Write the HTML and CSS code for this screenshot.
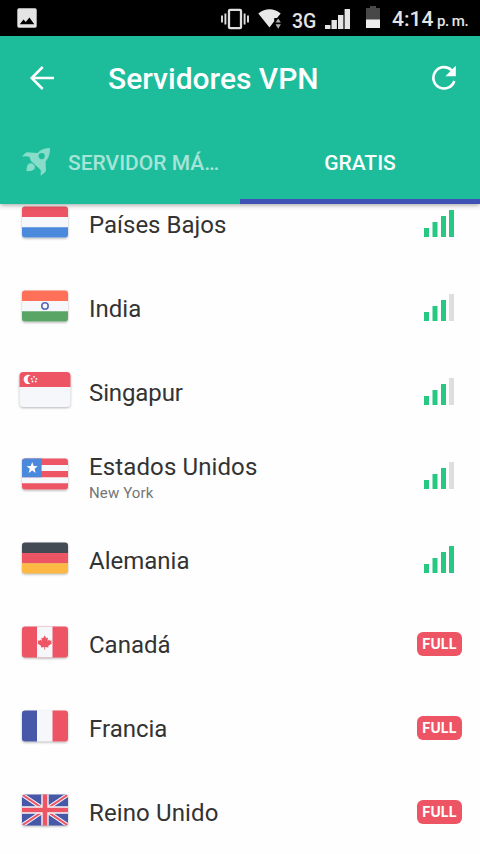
FILE: index.html
```
<!DOCTYPE html>
<html lang="es">
<head>
<meta charset="utf-8">
<title>Servidores VPN</title>
<link rel="stylesheet" href="styles.css">
</head>
<body>
<svg width="0" height="0" class="defs">
  <defs>
    <clipPath id="flag"><rect x="3" y="4.5" width="46" height="31" rx="3"/></clipPath>
    <clipPath id="flag-large"><rect x=".5" y="2" width="51" height="35" rx="4"/></clipPath>
  </defs>
</svg>
<div class="status">
  <svg class="st-photo" width="20" height="20" viewBox="0 0 20 20"><rect x=".3" y=".3" width="19.4" height="19.4" rx="1.6" fill="#e4e4e4"/><path d="M2.8 16.2 6.5 11.5 8.8 14 12.4 9.6 17.3 16.2z" fill="#000"/></svg>
  <svg class="st-vibrate" width="28" height="22" viewBox="0 0 28 22"><rect x="8" y="1.8" width="12" height="18.4" rx="1" fill="none" stroke="#dedede" stroke-width="2.3"/><path d="M1 7.5v7M4.4 5.5v11M23.6 5.5v11M27 7.5v7" stroke="#dedede" stroke-width="1.9"/></svg>
  <svg class="st-wifi" width="24" height="22" viewBox="0 0 24 22"><path d="M.3 4.4Q11.5-4 22.7 4.4L19 9h-2.8v3.2L11.5 18.600z" fill="#e8e8e8"/><path d="M17.500 13.500 20.200 9.500 22.900 13.500zM17.500 15.300H22.900L20.200 19.800z" fill="#b0b0b0"/></svg>
  <span class="st-net">3G</span>
  <svg class="st-cell" width="25" height="20" viewBox="0 0 25 20"><path d="M0 16h5.400v4H0zM6.500 11h5.400v9H6.500zM13 6h5.400v14H13zM19.600 0H25v20h-5.400z" fill="#e4e4e4"/></svg>
  <svg class="st-battery" width="14" height="22" viewBox="0 0 14 22"><path d="M0 2h4V0h6v2h4v12H0z" fill="#484848"/><path d="M0 13.500h14V22H0z" fill="#ededed"/></svg>
  <span class="st-time">4:14</span><span class="st-pm">p. m.</span>
</div>
<header class="header">
  <div class="toolbar">
    <svg class="back" width="26" height="26" viewBox="0 0 26 26"><path d="M25 13H3M13.700 2 2.700 13 13.700 24" fill="none" stroke="#fff" stroke-width="2.500"/></svg>
    <h1 class="title">Servidores VPN</h1>
    <svg class="refresh" width="26" height="26" viewBox="0 0 26 26"><path d="M20.700 5.300A10.700 10.700 0 1 0 23.300 16" fill="none" stroke="#fff" stroke-width="2.600"/><path d="M24.800.8V11.200H14.400z" fill="#fff"/></svg>
  </div>
  <nav class="tabs">
    <div class="tab tab-fast">
      <svg class="rocket" width="30" height="30" viewBox="0 0 30 30"><path fill-rule="evenodd" d="M29 1Q21 1 16.500 6L6 5.300Q4.500 5.500 1 9.500Q5.500 8.800 8.500 10L10 14L17 20.500L19.800 23L19.600 28.800Q23.500 26.500 25 24L24.600 14.500C28 11 29 6 29 1zM20.700 6a3.100 3.100 0 1 1 0 6.200 3.100 3.100 0 0 1 0-6.200z"/><path d="M5.500 24.200Q5.500 18.500 7.500 16.900C11 15 15 18.500 13.600 21.700Q12 24.200 5.500 24.200z"/></svg>
      <span class="tab-label">SERVIDOR MÁ…</span>
    </div>
    <div class="tab tab-active"><span class="tab-label">GRATIS</span></div>
  </nav>
</header>
<main class="list">
  <div class="row">
    <svg class="flag" width="52" height="40" viewBox="0 0 52 40"><g clip-path="url(#flag)"><path fill="#f5f7fa" d="M3 4h46v32H3z"/><path fill="#ed5565" d="M3 4h46v11H3z"/><path fill="#4a89dc" d="M3 25.200h46V36H3z"/></g></svg>
    <div class="name">Países Bajos</div>
    <svg class="signal" width="30" height="27" viewBox="0 0 30 27"><path d="M0 18h5v9H0zM8.500 12h5v15h-5zM17 6h5v21h-5zM25 0h5v27h-5z"/></svg>
  </div>
  <div class="row">
    <svg class="flag" width="52" height="40" viewBox="0 0 52 40"><g clip-path="url(#flag)"><path fill="#f5f7fa" d="M3 4h46v32H3z"/><path fill="#ff7058" d="M3 4h46v11H3z"/><path fill="#58a566" d="M3 25.200h46V36H3z"/><circle cx="26" cy="20" r="3.200" fill="none" stroke="#5866b8" stroke-width="1.600"/></g></svg>
    <div class="name">India</div>
    <svg class="signal" width="30" height="27" viewBox="0 0 30 27"><path d="M0 18h5v9H0zM8.500 12h5v15h-5zM17 6h5v21h-5z"/><path class="off" d="M25 0h5v27h-5z"/></svg>
  </div>
  <div class="row">
    <svg class="flag" width="52" height="40" viewBox="0 0 52 40"><g clip-path="url(#flag-large)"><path fill="#f5f7fa" d="M0 2h52v36H0z"/><path fill="#ed5565" d="M0 2h52v15H0z"/><path fill="#fff" d="M11.500 5.200A4.700 4.700 0 1 0 11.500 13.600 4.500 4.500 0 0 1 11.500 5.200z"/><g fill="#fff"><circle cx="15" cy="6.800" r=".9"/><circle cx="12.700" cy="8.800" r=".9"/><circle cx="17.400" cy="8.800" r=".9"/><circle cx="13.500" cy="11.500" r=".9"/><circle cx="16.700" cy="11.500" r=".9"/></g></g></svg>
    <div class="name name-tight">Singapur</div>
    <svg class="signal" width="30" height="27" viewBox="0 0 30 27"><path d="M0 18h5v9H0zM8.500 12h5v15h-5zM17 6h5v21h-5z"/><path class="off" d="M25 0h5v27h-5z"/></svg>
  </div>
  <div class="row">
    <svg class="flag" width="52" height="40" viewBox="0 0 52 40"><g clip-path="url(#flag)"><path fill="#f5f7fa" d="M3 4h46v32H3z"/><path fill="#ed5565" d="M3 4h46v7H3zM3 17h46v6.200H3zM3 29.300h46V36H3z"/><path fill="#4a89dc" d="M3 4h19.600v19.200H3z"/><path fill="#fff" d="M13.200 8l1.500 4 4.100.2-3.200 2.600 1.100 4.100-3.500-2.300-3.500 2.300 1.100-4.100-3.200-2.600 4.100-.2z"/></g></svg>
    <div class="name name-wide">Estados Unidos<div class="city">New York</div></div>
    <svg class="signal" width="30" height="27" viewBox="0 0 30 27"><path d="M0 18h5v9H0zM8.500 12h5v15h-5zM17 6h5v21h-5z"/><path class="off" d="M25 0h5v27h-5z"/></svg>
  </div>
  <div class="row">
    <svg class="flag" width="52" height="40" viewBox="0 0 52 40"><g clip-path="url(#flag)"><path fill="#434a54" d="M3 4h46v11H3z"/><path fill="#ed5565" d="M3 15h46v10.200H3z"/><path fill="#fdb943" d="M3 25.200h46V36H3z"/></g></svg>
    <div class="name">Alemania</div>
    <svg class="signal" width="30" height="27" viewBox="0 0 30 27"><path d="M0 18h5v9H0zM8.500 12h5v15h-5zM17 6h5v21h-5zM25 0h5v27h-5z"/></svg>
  </div>
  <div class="row">
    <svg class="flag" width="52" height="40" viewBox="0 0 52 40"><g clip-path="url(#flag)"><path fill="#ed5565" d="M3 4h46v32H3z"/><path fill="#f5f7fa" d="M18 4h15.500v32H18z"/><path fill="#ed5565" d="M25.700 13.500l1.700 2.700 1.600-.8-.5 3.700 1.800-1.500.6 1.200 1.900-.3-.7 2 .9.700-3.800 2.900.3 1.300-3.400-.4.100 2.500h-1l.1-2.500-3.400.4.300-1.300-3.800-2.900.9-.7-.7-2 1.900.3.600-1.200 1.800 1.500-.5-3.700 1.600.8z"/></g></svg>
    <div class="name">Canadá</div>
    <span class="full">FULL</span>
  </div>
  <div class="row">
    <svg class="flag" width="52" height="40" viewBox="0 0 52 40"><g clip-path="url(#flag)"><path fill="#f5f7fa" d="M3 4h46v32H3z"/><path fill="#4758a9" d="M3 4h15v32H3z"/><path fill="#ed5565" d="M33.500 4H49v32H33.500z"/></g></svg>
    <div class="name">Francia</div>
    <span class="full">FULL</span>
  </div>
  <div class="row">
    <svg class="flag" width="52" height="40" viewBox="0 0 52 40"><g clip-path="url(#flag)"><path fill="#4758a9" d="M3 4h46v32H3z"/><path d="M3 4.500 49 35.500M49 4.500 3 35.500" stroke="#f5f7fa" stroke-width="4"/><path d="M3 4.500 49 35.500M49 4.500 3 35.500" stroke="#ed5565" stroke-width="2"/><path d="M26 4v32M3 20h46" stroke="#f5f7fa" stroke-width="7.400"/><path d="M26 4v32M3 20h46" stroke="#ed5565" stroke-width="4.600"/></g></svg>
    <div class="name name-wide">Reino Unido</div>
    <span class="full">FULL</span>
  </div>
</main>
</body>
</html>
```
FILE: styles.css
```
body {
  margin: 0;
  width: 480px;
  height: 854px;
  overflow: hidden;
  background: #fefefe;
  font-family: Roboto, "Liberation Sans", sans-serif;
  color: #333;
}
svg { display: block; flex: none; }
.defs { position: absolute; }
.status {
  display: flex;
  height: 36px;
  background: #000;
  color: #e4e4e4;
  font-weight: 500;
  white-space: nowrap;
}
.st-photo { margin: 8px 184px 0 17px; }
.st-vibrate { margin-top: 8px; }
.st-wifi { margin: 9px 0 0 9px; }
.st-net { width: 33px; margin: 10px 0 0 10px; font-size: 19.5px; line-height: 24px; }
.st-cell { margin: 9px 16px 0 0; }
.st-battery { margin-top: 6px; }
.st-time { width: 45px; margin: 7px 0 0 12px; font-size: 21px; line-height: 24px; }
.st-pm { margin-top: 9px; font-size: 15px; line-height: 24px; letter-spacing: -.5px; }
.header {
  position: relative;
  z-index: 1;
  height: 168px;
  background: #1dbd9c;
  color: #fff;
  box-shadow: 0 1px 5px rgba(0, 0, 0, .38);
}
.toolbar { display: flex; align-items: center; height: 84px; }
.back { margin-left: 29px; }
.title { flex: 1; margin: 0 0 0 53px; padding-top: 2px; font-size: 30px; line-height: 36px; font-weight: 500; }
.refresh { margin-right: 23px; }
.tabs { display: flex; height: 84px; }
.tab {
  box-sizing: border-box;
  display: flex;
  align-items: center;
  justify-content: center;
  width: 240px;
  border-bottom: 5px solid transparent;
  padding-top: 5px;
  font-size: 21px;
  font-weight: 500;
}
.tab-label { padding-top: 2px; }
.tab-fast { justify-content: flex-start; padding-left: 21px; color: #a6e4d7; }
.tab-active { border-color: #3f51b5; }
.rocket { margin-right: 17px; fill: #87dcca; }
.list { margin-top: -22px; }
.row { display: flex; align-items: center; height: 84px; }
.flag { margin: 0 18px 4px 19px; filter: drop-shadow(0 1px 1px rgba(0, 0, 0, .28)); }
.name { flex: 1; font-size: 24px; line-height: 28px; padding-top: 2px; }
.name-wide { letter-spacing: .12px; }
.name-tight { letter-spacing: -.12px; }
.city { font-size: 15px; line-height: 18px; padding-top: 3px; color: #757575; }
.signal { margin: 0 26px 1px 0; fill: #27c881; }
.signal .off { fill: #dedede; }
.full {
  width: 45px;
  height: 24px;
  margin-right: 18px;
  border-radius: 6px;
  background: #ed5565;
  color: #fff;
  font: 700 14px/24px Inter, sans-serif;
  text-align: center;
}
```
